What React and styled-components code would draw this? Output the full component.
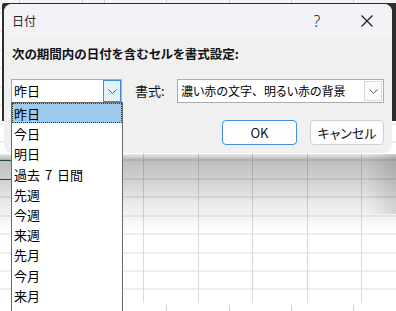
import React from 'react';
import styled, { createGlobalStyle } from 'styled-components';

const GlobalStyle = createGlobalStyle`
  html, body {
    margin: 0;
    padding: 0;
    background: #fff;
  }
  body {
    font-family: "Noto Sans CJK JP", "Noto Sans", sans-serif;
    font-feature-settings: "palt";
    color: #1a1a1a;
  }
`;

const periods = ['昨日', '今日', '明日', '過去 7 日間', '先週', '今週', '来週', '先月', '今月', '来月'];

const Chevron = () => (
  <svg width="9" height="5" viewBox="0 0 9 5">
    <path d="M0.5 0.5 L4.5 4.5 L8.5 0.5" fill="none" stroke="#5f5f5f" strokeWidth="1" />
  </svg>
);

const CloseIcon = () => (
  <svg width="12" height="12" viewBox="0 0 12 12">
    <path d="M0.5 0.5 L11.5 11.5 M11.5 0.5 L0.5 11.5" stroke="#1a1a1a" strokeWidth="1.1" />
  </svg>
);

export default function App() {
  return (
    <>
      <GlobalStyle />
      <Screen>
        <TopStrip />
        <Sheet />
        <BottomStrip />

        <DarkFrame />

        <Dialog>
          <TitleBar>
            <Title>日付</Title>
            <TitleButton>
              <Help>?</Help>
            </TitleButton>
            <TitleButton>
              <CloseIcon />
            </TitleButton>
          </TitleBar>
          <Body>
            <Heading>次の期間内の日付を含むセルを書式設定:</Heading>
            <FieldRow>
              <Combo $width={111}>
                <ComboText>昨日</ComboText>
                <ComboButton $focused>
                  <Chevron />
                </ComboButton>
              </Combo>
              <Label>書式:</Label>
              <Combo $width={207}>
                <ComboText $small>
                  濃い赤の文字<FullWidth>、</FullWidth>明るい赤の背景
                </ComboText>
                <ComboButton>
                  <Chevron />
                </ComboButton>
              </Combo>
            </FieldRow>
            <ButtonRow>
              <Button $primary $width={75}>OK</Button>
              <Button $width={74}>キャンセル</Button>
            </ButtonRow>
          </Body>
        </Dialog>

        <DropList>
          {periods.map((p, i) => (
            <DropItem key={p} $selected={i === 0}>{p}</DropItem>
          ))}
        </DropList>
      </Screen>
    </>
  );
}

const Screen = styled.div`
  position: relative;
  width: 396px;
  height: 311px;
  overflow: hidden;
  display: flex;
  flex-direction: column;
  background: #fff;
`;

const TopStrip = styled.div`
  height: 3px;
  background-color: #f4f4f4;
  background-image: repeating-linear-gradient(to right, #cfcfcf 0 1px, transparent 1px 62.25px);
  background-position: 104px 0;
`;

// the worksheet behind the dialog: grid lines, dialog shade, selection edge
const Sheet = styled.div`
  flex: 1;
  background:
    linear-gradient(to bottom, rgba(0, 0, 0, 0.08) 0, rgba(0, 0, 0, 0.26) 5px, rgba(0, 0, 0, 0.2) 22px, rgba(0, 0, 0, 0.08) 50px, rgba(0, 0, 0, 0) 80px) 0 151px / 100% 82px no-repeat,
    linear-gradient(to left, rgba(0, 0, 0, 0.12), rgba(0, 0, 0, 0)) 100% 151px / 30px 60px no-repeat,
    linear-gradient(#1f6b43, #1f6b43) 0 157px / 11px 1px no-repeat,
    linear-gradient(#1f6b43, #1f6b43) 0 176px / 11px 1px no-repeat,
    repeating-linear-gradient(to right, #d9d9d9 0 1px, transparent 1px 54.5px) 34px 0 / 100% 100%,
    repeating-linear-gradient(to bottom, #dcdcdc 0 1px, transparent 1px 18.43px) 0 9.56px / 100% 100%,
    #fff;
`;

const BottomStrip = styled.div`
  height: 8px;
  background-color: #fff;
  background-image: repeating-linear-gradient(to right, #cfcfcf 0 1px, transparent 1px 62.25px);
  background-position: 104px 2px;
  background-repeat: repeat-x;
  background-size: 100% 6px;
`;

const DarkFrame = styled.div`
  position: absolute;
  left: 2px;
  top: 3px;
  right: 0;
  height: 118px;
  background: #2e2e2e;
  border-top-left-radius: 2px;
`;

const Dialog = styled.div`
  position: absolute;
  left: 4px;
  top: 4px;
  width: 388px;
  height: 149px;
  border-radius: 8px;
  background: #f0f0f0;
  overflow: hidden;
  display: flex;
  flex-direction: column;
`;

const TitleBar = styled.div`
  height: 33px;
  display: flex;
  align-items: center;
  background: #f3f3f7;
  padding-left: 8px;
`;

const Title = styled.div`
  flex: 1;
  font-size: 12px;
  line-height: 16px;
  color: #1f1f1f;
`;

const TitleButton = styled.div`
  width: 50px;
  height: 33px;
  display: flex;
  align-items: center;
  justify-content: center;
`;

const Help = styled.span`
  font-family: "Noto Sans", sans-serif;
  font-size: 16px;
  font-weight: 300;
  line-height: 16px;
  color: #1a1a1a;
`;

const Body = styled.div`
  flex: 1;
  padding: 9px 8px 8px 7px;
  display: flex;
  flex-direction: column;
`;

const Heading = styled.div`
  font-size: 12.5px;
  font-weight: 700;
  line-height: 16px;
  margin-left: 1px;
  color: #111;
`;

const FieldRow = styled.div`
  margin-top: 17px;
  display: flex;
  align-items: center;
`;

const Combo = styled.div`
  flex: none;
  width: ${p => p.$width}px;
  height: 24px;
  box-sizing: border-box;
  border: 1px solid #acacac;
  background: #fff;
  display: flex;
`;

const ComboText = styled.div`
  flex: 1;
  padding-left: ${p => (p.$small ? '3px' : '2px')};
  font-size: ${p => (p.$small ? '12px' : '13px')};
  line-height: 22px;
  color: #000;
  white-space: nowrap;
  overflow: hidden;
`;

const FullWidth = styled.span`
  font-feature-settings: normal;
`;

const ComboButton = styled.div`
  width: 18px;
  box-sizing: border-box;
  border: 1px solid ${p => (p.$focused ? '#3f8fdd' : '#dadada')};
  background: ${p => (p.$focused ? '#e5f1fb' : '#fafafa')};
  display: flex;
  align-items: center;
  justify-content: center;
  margin: ${p => (p.$focused ? '0' : '1px')};
`;

const Label = styled.div`
  flex: none;
  width: 42px;
  margin-left: 13px;
  font-size: 13px;
  line-height: 16px;
  white-space: nowrap;
  color: #111;
`;

const ButtonRow = styled.div`
  margin-top: 17px;
  display: flex;
  justify-content: flex-end;
  gap: 13px;
`;

const Button = styled.div`
  width: ${p => p.$width}px;
  height: 25px;
  box-sizing: border-box;
  border-radius: 4px;
  border: 1px solid ${p => (p.$primary ? '#3d8ee0' : '#d0d0d0')};
  background: #fdfdfd;
  display: flex;
  align-items: center;
  justify-content: center;
  font-size: 13px;
  color: #111;
`;

const DropList = styled.div`
  position: absolute;
  left: 11px;
  top: 102px;
  width: 112px;
  height: 220px;
  box-sizing: border-box;
  border: 1px solid #6a6a6a;
  background: #fff;
`;

const DropItem = styled.div`
  height: 20.2px;
  box-sizing: border-box;
  padding: 1px 0 0 2px;
  font-size: 13px;
  line-height: 19px;
  white-space: pre;
  word-spacing: 2px;
  color: #000;
  background: ${p => (p.$selected ? '#9dcaef' : 'transparent')};
  outline: ${p => (p.$selected ? '1px dotted #333' : 'none')};
  outline-offset: -1px;
`;
